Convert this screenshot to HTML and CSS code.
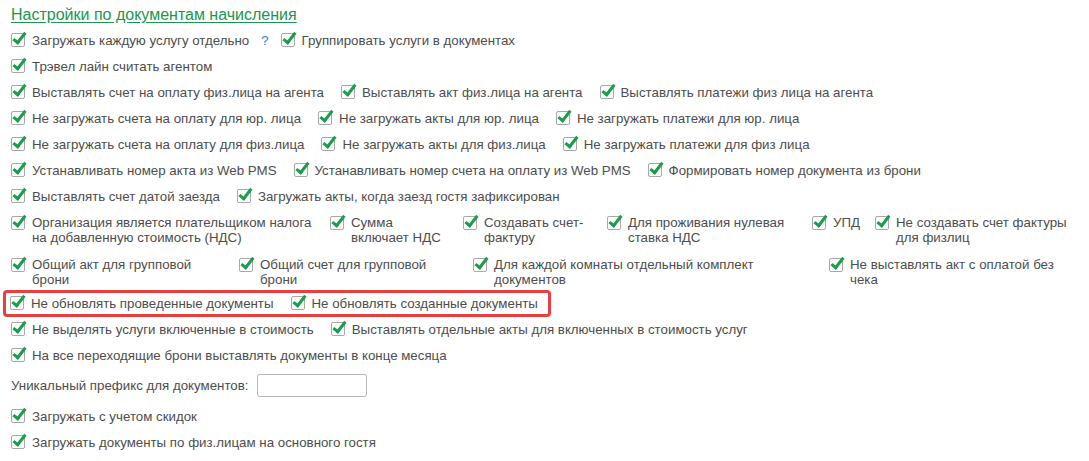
FILE: index.html
```html
<!DOCTYPE html>
<html lang="ru">
<head>
  <meta charset="UTF-8" />
  <title>Настройки по документам начисления</title>
  <link rel="stylesheet" href="styles.css">
</head>
<body>

  <div class="form">
    <a class="zagolovok" href="#">Настройки по документам начисления</a>

    <div class="linha">
      <label class="item"><span class="cb"></span>Загружать каждую услугу отдельно</label>
      <span class="ajuda">?</span>
      <label class="item"><span class="cb"></span>Группировать услуги в документах</label>
    </div>

    <div class="linha">
      <label class="item"><span class="cb"></span>Трэвел лайн считать агентом</label>
    </div>

    <div class="linha">
      <label class="item"><span class="cb"></span>Выставлять счет на оплату физ.лица на агента</label>
      <label class="item"><span class="cb"></span>Выставлять акт физ.лица на агента</label>
      <label class="item"><span class="cb"></span>Выставлять платежи физ лица на агента</label>
    </div>

    <div class="linha">
      <label class="item"><span class="cb"></span>Не загружать счета на оплату для юр. лица</label>
      <label class="item"><span class="cb"></span>Не загружать акты для юр. лица</label>
      <label class="item"><span class="cb"></span>Не загружать платежи для юр. лица</label>
    </div>

    <div class="linha">
      <label class="item"><span class="cb"></span>Не загружать счета на оплату для физ.лица</label>
      <label class="item"><span class="cb"></span>Не загружать акты для физ.лица</label>
      <label class="item"><span class="cb"></span>Не загружать платежи для физ лица</label>
    </div>

    <div class="linha">
      <label class="item"><span class="cb"></span>Устанавливать номер акта из Web PMS</label>
      <label class="item"><span class="cb"></span>Устанавливать номер счета на оплату из Web PMS</label>
      <label class="item"><span class="cb"></span>Формировать номер документа из брони</label>
    </div>

    <div class="linha">
      <label class="item"><span class="cb"></span>Выставлять счет датой заезда</label>
      <label class="item"><span class="cb"></span>Загружать акты, когда заезд гостя зафиксирован</label>
    </div>

    <!-- поля в две строки -->
    <div class="grade grade-nds">
      <label class="item"><span class="cb"></span><span class="txt" style="width: 290px">Организация является плательщиком налога на добавленную стоимость (НДС)</span></label>
      <label class="item"><span class="cb"></span><span class="txt" style="width: 94px">Сумма включает НДС</span></label>
      <label class="item"><span class="cb"></span><span class="txt" style="width: 108px">Создавать счет-фактуру</span></label>
      <label class="item"><span class="cb"></span><span class="txt" style="width: 165px">Для проживания нулевая ставка НДС</span></label>
      <label class="item"><span class="cb"></span><span class="txt">УПД</span></label>
      <label class="item"><span class="cb"></span><span class="txt" style="width: 178px">Не создавать счет фактуры для физлиц</span></label>
    </div>

    <div class="grade grade-grupo">
      <label class="item"><span class="cb"></span><span class="txt" style="width: 168px">Общий акт для групповой брони</span></label>
      <label class="item"><span class="cb"></span><span class="txt" style="width: 178px">Общий счет для групповой брони</span></label>
      <label class="item"><span class="cb"></span><span class="txt" style="width: 268px">Для каждой комнаты отдельный комплект документов</span></label>
      <label class="item"><span class="cb"></span><span class="txt" style="width: 215px">Не выставлять акт с оплатой без чека</span></label>
    </div>

    <div class="linha">
      <div class="destaque">
        <label class="item"><span class="cb"></span>Не обновлять проведенные документы</label>
        <label class="item"><span class="cb"></span>Не обновлять созданные документы</label>
      </div>
    </div>

    <div class="linha">
      <label class="item"><span class="cb"></span>Не выделять услуги включенные в стоимость</label>
      <label class="item"><span class="cb"></span>Выставлять отдельные акты для включенных в стоимость услуг</label>
    </div>

    <div class="linha">
      <label class="item"><span class="cb"></span>На все переходящие брони выставлять документы в конце месяца</label>
    </div>

    <div class="linha linha-campo">
      <span class="rotulo">Уникальный префикс для документов:</span>
      <input class="campo" type="text">
    </div>

    <div class="linha">
      <label class="item"><span class="cb"></span>Загружать с учетом скидок</label>
    </div>

    <div class="linha">
      <label class="item"><span class="cb"></span>Загружать документы по физ.лицам на основного гостя</label>
    </div>
  </div>

</body>
</html>
```

FILE: styles.css
```css
body {
  margin: 0;
  background: #ffffff;
  font-family: 'Liberation Sans', Arial, sans-serif;
  font-size: 13.3px;
  color: #4d4d4d;
  overflow: hidden;
}

.form {
  padding: 5px 0 0 11px;
}

.zagolovok {
  display: inline-block;
  font-size: 16px;
  line-height: 20px;
  color: #1a9650;
  text-decoration: underline;
  text-underline-offset: 2px;
}

.linha {
  display: flex;
  align-items: center;
  gap: 17px;
  height: 26px;
  line-height: 15px;
}

.linha:first-of-type {
  margin-top: 2px;
}

.item {
  display: flex;
  align-items: flex-start;
  white-space: nowrap;
}

.linha .item {
  align-items: center;
}

/* чекбокс с зеленой галочкой */
.cb {
  position: relative;
  flex: none;
  width: 12px;
  height: 12px;
  margin-right: 7px;
  border: 1px solid #a8a8a8;
  border-radius: 2px;
  background: #fff;
}

.cb::after {
  content: '';
  position: absolute;
  left: 4px;
  top: -4px;
  width: 4px;
  height: 11px;
  border: solid #1b9e4b;
  border-width: 0 3px 3px 0;
  transform: rotate(38deg);
}

.ajuda {
  margin: 0 -5px;
  color: #3a7bd5;
}

.grade {
  display: grid;
  line-height: 15px;
}

.grade .item {
  white-space: normal;
}

.grade .cb {
  margin-top: 1px;
}

.grade-nds {
  padding: 6px 0 7px;
  grid-template-columns: 319px 133px 144px 205px 63px 1fr;
}

.grade-grupo {
  padding: 5px 0 3px;
  grid-template-columns: 228px 234px 356px 1fr;
}

/* красная рамка вокруг двух флажков */
.destaque {
  display: flex;
  align-items: center;
  gap: 17px;
  box-sizing: border-box;
  height: 27px;
  margin-left: -8px;
  padding: 0 10px 0 4px;
  border: 3px solid #e8403f;
  border-radius: 4px;
}

.linha-campo {
  height: 35px;
  gap: 8px;
}

.campo {
  width: 108px;
  height: 21px;
  padding: 0;
  border: 1px solid #b5b5b5;
  border-radius: 3px;
}
```
